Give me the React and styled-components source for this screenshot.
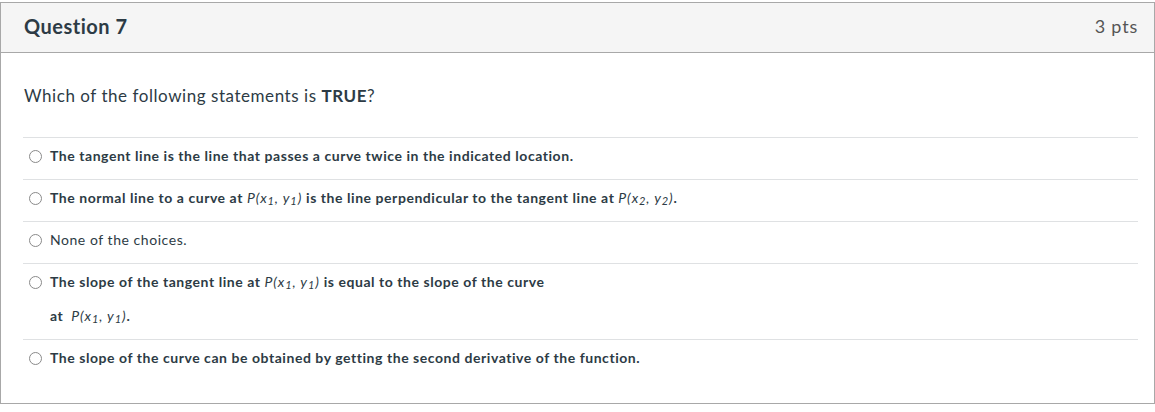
import React from "react";
import styled, { createGlobalStyle } from "styled-components";

const GlobalStyle = createGlobalStyle`
  body {
    margin: 0;
    background: #fff;
    font-family: Lato, "Liberation Sans", sans-serif;
    color: #2d3b45;
  }
`;

const Card = styled.div`
  margin-top: 2px;
  width: 1155px;
  height: 402px;
  box-sizing: border-box;
  border: 1px solid #a8a8a8;
  background: #fff;
`;

const Header = styled.div`
  height: 50px;
  box-sizing: border-box;
  background: #f5f5f5;
  border-bottom: 1px solid #a8a8a8;
  display: flex;
  align-items: center;
  justify-content: space-between;
  padding: 0 16px 4px 23px;
`;

const Title = styled.h2`
  margin: 0;
  font-size: 20px;
  font-weight: 700;
  letter-spacing: 0.5px;
  color: #2d3b45;
`;

const Points = styled.span`
  font-size: 18px;
  letter-spacing: 0.8px;
  color: #555;
`;

const Body = styled.div`
  padding: 31px 16px 0 22px;
`;

const Prompt = styled.p`
  margin: 0 0 29px 1px;
  font-size: 17px;
  line-height: 24px;
  letter-spacing: 0.55px;
`;

const Answers = styled.div`
  display: flex;
  flex-direction: column;
`;

const Answer = styled.label`
  display: flex;
  align-items: flex-start;
  gap: 8px;
  border-top: 1px solid #dfe1e3;
  padding: 8px 0 13px 6px;
  font-size: 14px;
  line-height: 20px;
  letter-spacing: 0.55px;
  font-weight: ${(p) => (p.$plain ? 400 : 700)};
`;

const Radio = styled.span`
  flex: none;
  width: 13px;
  height: 13px;
  margin-top: 4px;
  box-sizing: border-box;
  border: 1px solid #8a8a8a;
  border-radius: 50%;
  background: #fff;
`;

const Text = styled.div`
  display: flex;
  flex-direction: column;
  gap: 14px;
`;

const Line = styled.span``;

const Math = styled.span`
  font-style: italic;
  font-weight: 400;
  letter-spacing: 0.9px;
  sub {
    font-size: 11px;
    vertical-align: -2px;
    line-height: 0;
  }
`;

const Point = ({ n }) => (
  <Math>
    P(x<sub>{n}</sub>, y<sub>{n}</sub>)
  </Math>
);

export default function App() {
  return (
    <>
      <GlobalStyle />
      <Card>
        <Header>
          <Title>Question 7</Title>
          <Points>3 pts</Points>
        </Header>
        <Body>
          <Prompt>
            Which of the following statements is <b>TRUE</b>?
          </Prompt>
          <Answers>
            <Answer>
              <Radio />
              <Text>
                <Line>
                  The tangent line is the line that passes a curve twice in the indicated location.
                </Line>
              </Text>
            </Answer>
            <Answer>
              <Radio />
              <Text>
                <Line>
                  The normal line to a curve at <Point n={1} /> is the line perpendicular to the
                  tangent line at <Point n={2} />.
                </Line>
              </Text>
            </Answer>
            <Answer $plain>
              <Radio />
              <Text>
                <Line>None of the choices.</Line>
              </Text>
            </Answer>
            <Answer>
              <Radio />
              <Text>
                <Line>
                  The slope of the tangent line at <Point n={1} /> is equal to the slope of the curve
                </Line>
                <Line>
                  at&nbsp; <Point n={1} />.
                </Line>
              </Text>
            </Answer>
            <Answer>
              <Radio />
              <Text>
                <Line>
                  The slope of the curve can be obtained by getting the second derivative of the
                  function.
                </Line>
              </Text>
            </Answer>
          </Answers>
        </Body>
      </Card>
    </>
  );
}
